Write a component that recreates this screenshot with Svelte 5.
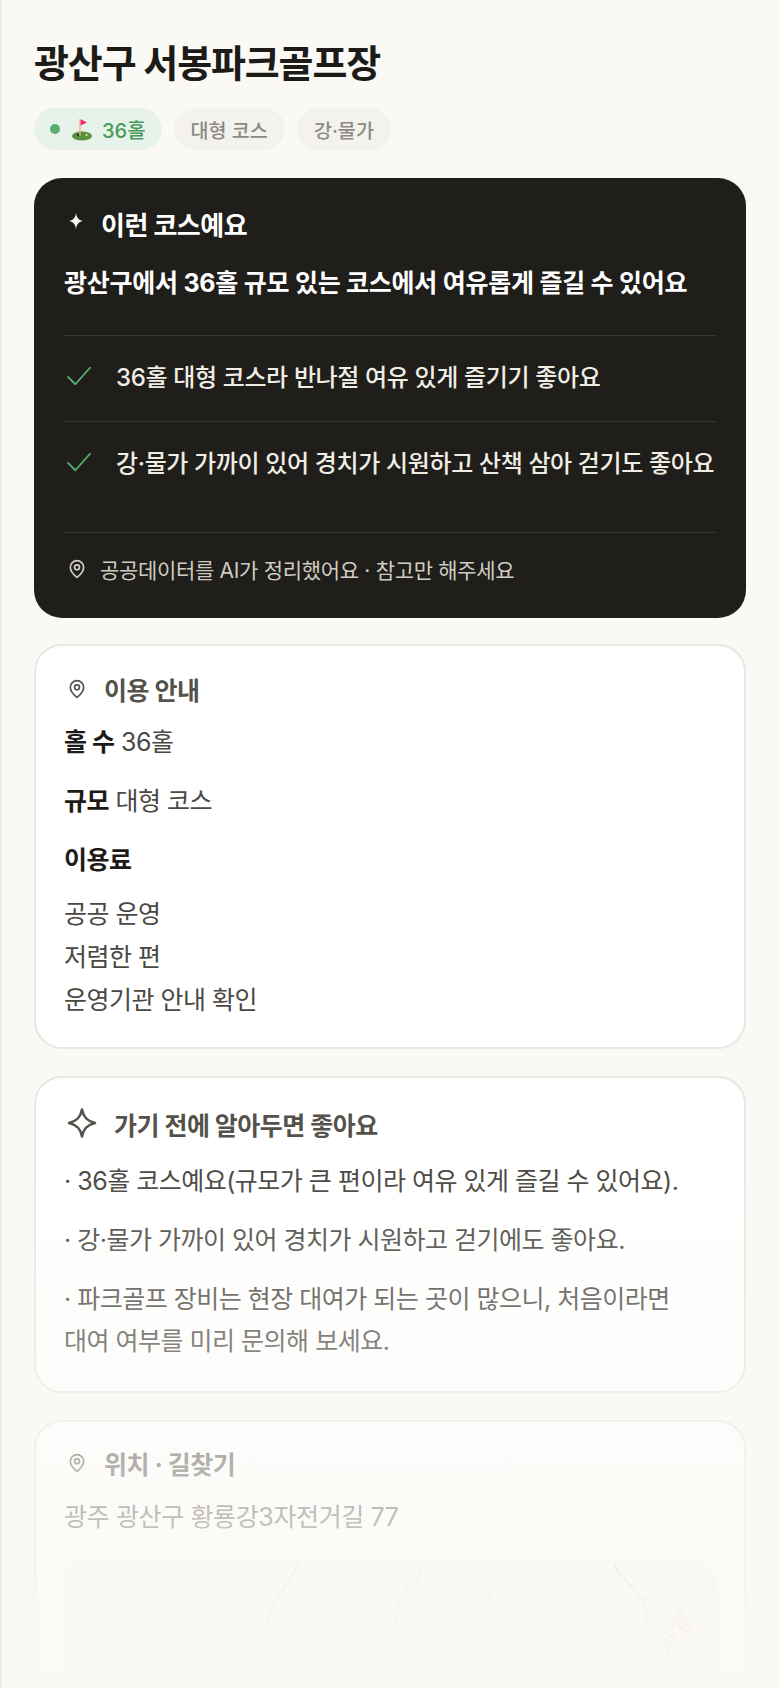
<script>
  const tags = ['대형 코스', '강·물가'];
  const points = [
    '36홀 대형 코스라 반나절 여유 있게 즐기기 좋아요',
    '강·물가 가까이 있어 경치가 시원하고 산책 삼아 걷기도 좋아요'
  ];
  const notes = [
    '· 36홀 코스예요(규모가 큰 편이라 여유 있게 즐길 수 있어요).',
    '· 강·물가 가까이 있어 경치가 시원하고 걷기에도 좋아요.',
    '· 파크골프 장비는 현장 대여가 되는 곳이 많으니, 처음이라면 대여 여부를 미리 문의해 보세요.'
  ];
  const fees = ['공공 운영', '저렴한 편', '운영기관 안내 확인'];
</script>

{#snippet pin()}
  <svg class="pin" viewBox="0 0 24 24" fill="none" stroke="currentColor" stroke-width="2" stroke-linecap="round" stroke-linejoin="round" aria-hidden="true">
    <path d="M20 10c0 5-5.5 10.2-7.4 11.8a1 1 0 0 1-1.2 0C9.5 20.2 4 15 4 10a8 8 0 0 1 16 0" />
    <circle cx="12" cy="10" r="3" />
  </svg>
{/snippet}

<div class="page">
  <h1>광산구 서봉파크골프장</h1>

  <div class="tags">
    <span class="tag green">
      <i class="dot"></i>
      <svg class="flag" viewBox="0 0 24 24" aria-hidden="true">
        <ellipse cx="12" cy="19" rx="10" ry="4.6" fill="#5c913b" />
        <rect x="9.4" y="2" width="1.2" height="17" fill="#f4ab7a" />
        <path d="M10.6 2.2 17 5.4l-6.4 3.2z" fill="#f4257a" />
        <circle cx="8" cy="18" r="1.2" fill="#292f33" />
        <circle cx="16.5" cy="18" r="1.1" fill="#e1e8ed" />
      </svg>
      36홀
    </span>
    {#each tags as t}
      <span class="tag">{t}</span>
    {/each}
  </div>

  <section class="hero">
    <div class="hero-head">
      <svg class="spark-solid" viewBox="0 0 24 24" aria-hidden="true">
        <path d="M12 1c.8 6.6 3.4 9.6 9 11-5.6 1.4-8.2 4.4-9 11-.8-6.6-3.4-9.6-9-11 5.6-1.4 8.2-4.4 9-11z" fill="currentColor" />
      </svg>
      <h2>이런 코스예요</h2>
    </div>
    <p class="lead">광산구에서 36홀 규모 있는 코스에서 여유롭게 즐길 수 있어요</p>
    <ul class="points">
      {#each points as p}
        <li>
          <svg class="check" viewBox="0 0 28 24" fill="none" stroke="currentColor" stroke-width="2" stroke-linecap="round" stroke-linejoin="round" aria-hidden="true">
            <path d="M2 13l8 8L26 3" />
          </svg>
          <span>{p}</span>
        </li>
      {/each}
    </ul>
    <div class="hero-foot">
      {@render pin()}
      <span>공공데이터를 AI가 정리했어요 · 참고만 해주세요</span>
    </div>
  </section>

  <section class="card info">
    <div class="card-head">
      {@render pin()}
      <h3>이용 안내</h3>
    </div>
    <p class="row"><b>홀 수</b> 36홀</p>
    <p class="row"><b>규모</b> 대형 코스</p>
    <p class="row fee"><b>이용료</b></p>
    {#each fees as f}
      <p class="fee-line">{f}</p>
    {/each}
  </section>

  <section class="card tips">
    <div class="card-head">
      <svg class="spark" viewBox="0 0 32 32" fill="none" stroke="currentColor" stroke-width="2.6" stroke-linejoin="round" aria-hidden="true">
        <path d="M16 2.5c1.4 7.6 4.8 11.6 13 13.5-8.2 1.9-11.6 5.9-13 13.5-1.4-7.6-4.8-11.6-13-13.5 8.2-1.9 11.6-5.9 13-13.5z" />
      </svg>
      <h3>가기 전에 알아두면 좋아요</h3>
    </div>
    <div class="notes">
      {#each notes as n}
        <p class="note">{n}</p>
      {/each}
    </div>
  </section>

  <section class="card where">
    <div class="card-head">
      {@render pin()}
      <h3>위치 · 길찾기</h3>
    </div>
    <p class="addr">광주 광산구 황룡강3자전거길 77</p>
    <div class="map">
      <svg viewBox="0 0 650 300" fill="none" aria-hidden="true">
        <path d="M248 80l4-25 20-1 10-11 53-3 77-17 15 5 5 25 3 47-10 30H262l-12-30z" fill="#e8eef2" />
        <path d="M285 48h43v59h-43z" fill="#e9f0df" stroke="#f9f9f5" stroke-width="2" />
        <path d="M296 48v10h21V48M296 107V97h21v10M285 78h43" stroke="#f9f9f5" stroke-width="2" />
        <circle cx="306" cy="78" r="5" stroke="#f9f9f5" stroke-width="2" />
        <path d="M357 3l-4 15-11 9-9 13-3 23 3 30 2 27" stroke="#d5dfca" stroke-width="2" stroke-dasharray="8 6" />
        <path d="M387 37l-17 1v24l20 3M368 60l-30 2-3 35M355 85v18l-20 20" stroke="#fff" stroke-width="2.5" />
        <path d="M233 2l-24 38-15 40-18 8v40" stroke="#d8e3cc" stroke-width="2" />
        <path d="M550 2l2 5 28 31 3 19 29 33 20 20" stroke="#cfdbc2" stroke-width="2" />
        <g stroke="#e6e9e0" stroke-width="1">
          <path d="M472 0v60q0 25 30 40t70 0" />
          <path d="M485 0v50q2 28 30 36t60 -10" />
          <path d="M500 0v40q0 24 24 28t50 -6" />
          <path d="M512 0l-6 30q0 12 14 8l30-6 40 12q18-8 12-24l-8-20" />
          <path d="M530 0v18q4 12 20 12l40 8q12-16 4-38" />
          <path d="M610 0l8 40v40M625 0l4 50" />
        </g>
        <text x="600" y="118" transform="rotate(-62 600 118)" class="label">동산호</text>
      </svg>
    </div>
  </section>

  <div class="fade"></div>
</div>

<style>
  :global(body) {
    margin: 0;
    background: #faf9f5;
  }

  .page {
    position: relative;
    box-sizing: border-box;
    height: 1688px;
    overflow: hidden;
    padding: 37px 34px 0 32px;
    border-left: 2px solid #eeeee6;
    background: #faf9f5;
    font-family: Inter, "Noto Sans CJK KR", sans-serif;
    color: #1f1e1a;
  }

  h1 {
    margin: 0;
    font-size: 38px;
    line-height: 52px;
    font-weight: 700;
    letter-spacing: -0.03em;
    color: #1c1b18;
  }

  .tags {
    display: flex;
    gap: 12px;
    margin-top: 19px;
  }

  .tag {
    display: flex;
    align-items: center;
    height: 42px;
    padding: 0 17px;
    border-radius: 21px;
    background: #f3f2ee;
    color: #8c8a82;
    font-size: 19.6px;
    font-weight: 500;
  }

  .tag.green {
    padding: 0 16px;
    background: #e6f2ea;
    color: #4a9a5c;
    font-size: 20px;
  }

  .dot {
    width: 10px;
    height: 10px;
    border-radius: 50%;
    background: #5aae6a;
    margin-right: 10px;
  }

  .flag {
    width: 24px;
    height: 24px;
    margin-right: 8px;
  }

  .hero {
    margin-top: 28px;
    height: 440px;
    box-sizing: border-box;
    padding: 26px 30px 0;
    border-radius: 28px;
    background: #1f1e1a;
    color: #fff;
  }

  .hero-head {
    display: flex;
    align-items: center;
    height: 38px;
  }

  .spark-solid {
    width: 18px;
    height: 18px;
    margin: -4px 16px 0 3px;
    color: #f5f3ec;
  }

  h2 {
    margin: 0;
    font-size: 26px;
    font-weight: 700;
    letter-spacing: -0.02em;
  }

  .lead {
    margin: 21px 0 0;
    font-size: 25px;
    line-height: 40px;
    font-weight: 700;
    letter-spacing: -0.01em;
  }

  .points {
    list-style: none;
    margin: 32px 0 0;
    padding: 0;
    height: 197px;
  }

  .points li {
    display: flex;
    align-items: center;
    box-sizing: border-box;
    height: 86px;
    padding-bottom: 6px;
    border-top: 1px solid #363530;
    font-size: 24px;
    font-weight: 500;
    letter-spacing: -0.015em;
    color: #f0ede4;
  }

  .check {
    width: 26px;
    height: 22px;
    margin: 0 24px 0 2px;
    color: #5aae6a;
    flex: none;
  }

  .hero-foot {
    display: flex;
    align-items: center;
    gap: 13px;
    height: 72px;
    border-top: 1px solid #363530;
    font-size: 21px;
    letter-spacing: -0.015em;
    color: #cfccc2;
  }

  .pin {
    width: 20px;
    height: 20px;
    margin-left: 3px;
    flex: none;
  }

  .card {
    box-sizing: border-box;
    padding: 22px 28px 0;
    border: 2px solid #e9e7e1;
    border-radius: 28px;
    background: #fff;
  }

  .info { height: 405px; margin-top: 26px; }
  .tips { height: 317px; margin-top: 27px; }
  .where { height: 400px; margin-top: 27px; }

  .card-head {
    display: flex;
    align-items: center;
    gap: 17px;
    height: 40px;
    color: #55524b;
  }

  .info .card-head { margin-top: 1px; }
  .tips .card-head { margin-top: 4px; gap: 16px; }
  .where .card-head { margin-top: -1px; }

  h3 {
    margin: 0;
    font-size: 25px;
    font-weight: 700;
    letter-spacing: -0.02em;
  }

  .spark {
    width: 32px;
    height: 32px;
    flex: none;
    margin: -3px 0 0 2px;
  }

  .row {
    margin: 0;
    height: 59px;
    font-size: 25px;
    line-height: 40px;
    letter-spacing: -0.02em;
    color: #4a4843;
  }

  .row:first-of-type {
    margin-top: 13px;
  }

  .row b {
    font-weight: 700;
    color: #1c1b18;
  }

  .row.fee {
    height: 53px;
  }

  .fee-line {
    margin: 0;
    font-size: 25px;
    line-height: 43px;
    letter-spacing: -0.02em;
    color: #4a4843;
  }

  .notes {
    display: flex;
    flex-direction: column;
    gap: 17px;
    margin-top: 16px;
  }

  .note {
    margin: 0;
    font-size: 25px;
    line-height: 42px;
    letter-spacing: -0.02em;
    color: #4a4843;
    word-break: keep-all;
  }

  .addr {
    margin: 14px 0 0;
    font-size: 25px;
    line-height: 40px;
    letter-spacing: -0.015em;
    color: #4a4843;
  }

  .map {
    margin-top: 23px;
    height: 300px;
    border: 2px solid #efeee9;
    border-radius: 24px;
    overflow: hidden;
    background: #f9f9f4;
  }

  .map svg {
    display: block;
    width: 100%;
    height: 100%;
  }

  .label {
    font-size: 26px;
    font-weight: 700;
    fill: #eccbb0;
  }

  .fade {
    position: absolute;
    left: 0;
    right: 0;
    bottom: 0;
    height: 520px;
    background: linear-gradient(to bottom, rgba(250, 249, 245, 0), #faf9f5);
    pointer-events: none;
  }
</style>
